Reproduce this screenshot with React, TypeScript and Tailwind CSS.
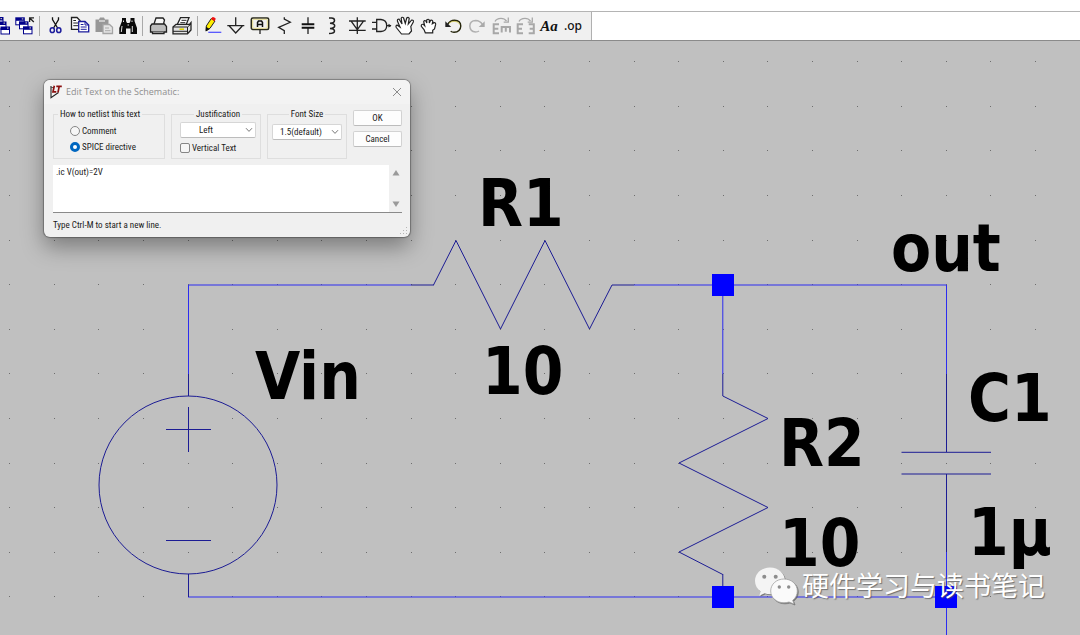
import type { ReactNode } from 'react'
import { clsx } from 'clsx'

const GRID = 44.6
const NAVY = '#00008b'

interface ToolButtonProps {
  label: string
  disabled?: boolean
  className?: string
  children: ReactNode
}

function ToolButton({ label, disabled, className, children }: ToolButtonProps) {
  return (
    <button
      type="button"
      aria-label={label}
      disabled={disabled}
      className={clsx('h-6 w-6 shrink-0', className)}
    >
      <svg viewBox="0 0 24 24" className="h-6 w-6" fill="none" stroke="#222" strokeWidth="1.3">
        {children}
      </svg>
    </button>
  )
}

function Separator() {
  return (
    <div className="flex h-5 w-[7px] shrink-0 justify-center">
      <div className="w-px bg-[#a9a9a9]" />
    </div>
  )
}

function MiniWindow({ x, y }: { x: number; y: number }) {
  return (
    <g stroke="none">
      <rect x={x} y={y} width="9.5" height="8" fill={NAVY} />
      <rect x={x + 1} y={y + 3.5} width="7.5" height="3.5" fill="#fff" />
      <rect x={x + 6.5} y={y + 1} width="1.5" height="1.2" fill="#bbb" />
    </g>
  )
}

function Toolbar() {
  return (
    <div className="flex h-[30px] border-t border-b border-t-[#b4b4b4] border-b-[#8a8a8a] bg-white">
      <div
        role="toolbar"
        aria-label="Main"
        className="flex shrink-0 items-center overflow-hidden border-r border-[#b0b0b0] bg-[#f0f0f0] pr-1.5"
      >
        <ToolButton label="Cascade" className="-ml-3">
          <MiniWindow x={6} y={3} />
          <MiniWindow x={9} y={7.5} />
          <MiniWindow x={12.5} y={12.5} />
        </ToolButton>
        <ToolButton label="Close all windows">
          <MiniWindow x={3.3} y={3.3} />
          <MiniWindow x={7} y={7.3} />
          <MiniWindow x={11} y={12.3} />
          <path d="M21.8 8 L18 4.2 M17.6 8 V3.8 H22" />
        </ToolButton>
        <Separator />
        <ToolButton label="Cut">
          <path d="M9.5 3.3 V5.5 L14.6 14 M15.5 3.3 V5.5 L10.6 14" stroke="#111" />
          <ellipse cx="9.3" cy="16.2" rx="2.1" ry="2.4" stroke="#1c1c9c" strokeWidth="1.5" />
          <ellipse cx="15.8" cy="16.2" rx="2.1" ry="2.4" stroke="#1c1c9c" strokeWidth="1.5" />
        </ToolButton>
        <ToolButton label="Copy">
          <path d="M4.5 3.5 H10 L13 6.5 V15.3 H4.5 Z" fill="#fff" />
          <path d="M6.3 6.5 H9 M6.3 9 H11 M6.3 11.7 H11" strokeWidth="1" />
          <path d="M11.7 7.5 H18 L21.7 11 V17.8 H11.7 Z" fill="#fff" stroke="#1c1c9c" />
          <path d="M18 7.5 V11 H21.7 M13.7 10.5 H16.5 M13.7 13 H19.7 M13.7 15.3 H19.7" stroke="#1c1c9c" strokeWidth="1" />
        </ToolButton>
        <ToolButton label="Paste" disabled>
          <path d="M4.5 5.5 H8 L9 3.5 H13 L14 5.5 H17.5 V18 H4.5 Z" fill="#979797" stroke="none" />
          <path d="M8 7 H14" stroke="#e6e6e6" />
          <path d="M12 10.5 H18.5 L21.5 13.3 V19.5 H12 Z" fill="#e4e4e4" stroke="#a5a5a5" />
          <path d="M14 14 H18 M14 16.7 H19.5" stroke="#aaa" strokeWidth="1" />
        </ToolButton>
        <ToolButton label="Find">
          <path
            d="M7 4 H11 V7 L12 9 H14.5 L15.5 7 V4 H19.5 V7 L22 14 V20 H15.5 V14.5 H11 V20 H4.3 V14 L7 7 Z"
            fill="#0a0a0a"
            stroke="none"
          />
          <path d="M8.5 6.5 V8 M17 6.5 V8 M7 12 L6.3 18 M17.3 12 V18 M12.5 11 H14" stroke="#ddd" strokeWidth="1" />
        </ToolButton>
        <Separator />
        <ToolButton label="Print setup">
          <path d="M8 10 L10 4 H17 L18.5 6 L17.5 10" fill="#f7f7f7" />
          <path d="M6 10 H18.5 L20.5 12.5 V18 H18 V19.5 H6.5 V18 H4.5 V12 Z" fill="#bdbdbd" />
          <path d="M6.5 17.5 H18" stroke="#666" strokeWidth="1" />
        </ToolButton>
        <ToolButton label="Print">
          <path d="M7 11 L10.5 3.7 H19 L16 11" fill="#fff" />
          <path d="M11.5 6.3 H16.5 M10.3 8.7 H15.3" strokeWidth="1" />
          <path d="M3 13 L6 10.3 H19.5 L21 8.5 V16 L17.5 19.8 H3 Z" fill="#e2e2e2" />
          <path d="M3 13 H17.5 L21 10 M17.5 13 V19.8 M3 17.3 H17.5" strokeWidth="1" />
          <path d="M9.5 15.2 H14" stroke="#e3d700" strokeWidth="1.6" />
        </ToolButton>
        <Separator />
        <ToolButton label="Draw wire">
          <path d="M7.3 18.3 H20.3" stroke="#4a4aff" strokeWidth="1.2" />
          <path d="M5 16.8 L5.3 12 L10.3 4.5 L14 7 L9 14.3 Z" fill="#ffee00" stroke="#222" strokeWidth="1" />
          <path d="M10 5 L11.3 3.2 Q13 2.7 14.8 4.8 L13.6 7.2 Z" fill="#ef1010" stroke="none" />
          <path d="M4.7 17.5 L5 12.7 L8.7 14.9 Z" fill="#111" stroke="none" />
        </ToolButton>
        <ToolButton label="Ground">
          <path d="M10.7 3.3 V11.7 M2.3 11.7 H19.3 M4.3 12 L10.7 19 L17.3 12" />
        </ToolButton>
        <ToolButton label="Label net">
          <rect x="2.3" y="4" width="17.4" height="11.5" rx="1.5" stroke="#2a2a1c" strokeWidth="1.5" />
          <rect x="3.7" y="5.3" width="14.6" height="9" rx="1" stroke="#e6dd8c" strokeWidth="1" />
          <path d="M11 15.5 V20" />
          <path d="M8.5 13 V8.5 L9.5 7 H12.5 L13.5 8.5 V13 M8.5 10.5 H13.5" strokeWidth="1.5" stroke="#111" />
        </ToolButton>
        <ToolButton label="Resistor">
          <path d="M11.3 3.3 V5 L17.3 8.3 L5.6 13.3 L11.3 16.7 V20" />
        </ToolButton>
        <ToolButton label="Capacitor">
          <path d="M11 3.3 V10 M11 14 V20" />
          <path d="M4.7 10.2 H17.3 M4.7 13.8 H17.3" stroke="#111" strokeWidth="1.9" />
        </ToolButton>
        <ToolButton label="Inductor">
          <path
            d="M8 4 H10.5 Q13.5 4 13.5 6.5 Q13.5 9 9 9.2 Q13.7 9.5 13.7 11.8 Q13.7 14.2 9 14.4 Q13.5 14.7 13.5 17 Q13.5 19.5 8 19.5"
            strokeWidth="1.5"
          />
        </ToolButton>
        <ToolButton label="Diode">
          <path d="M12.3 3.3 V20 M4 7 H20.7 M6.3 7.3 L12.3 15.7 L18.3 7.3 M4 16.3 H20.7" />
        </ToolButton>
        <ToolButton label="Component">
          <path d="M7.7 5.5 H12 Q17.7 6 17.7 11.7 Q17.7 17 12 17.5 H7.7 Z M3 8.3 H7.7 M3 15 H7.7 M17.7 11.7 H22" />
          <path d="M19.5 9.7 L22.5 11.7 L19.5 13.5 Z" fill="#222" stroke="none" />
        </ToolButton>
        <ToolButton label="Move">
          <path
            d="M8.5 20 L3.3 13.5 Q2.3 11.5 4.3 11.2 L7 13 L4.5 7.3 Q4 5 6 5 L9 10 L8.2 4.5 Q8.8 2.5 10.5 3.7 L12.3 9.3 L13.7 4 Q15.2 2.5 16.2 4.3 L15.3 10 L18.5 6.2 Q21 5.8 20.3 8 L17.8 12.5 L18.5 17 L16 20 Z"
            fill="#fff"
            strokeWidth="1.2"
          />
        </ToolButton>
        <ToolButton label="Drag">
          <path
            d="M8.3 18.8 L7 15.5 L4.3 12.3 Q4 10 6.3 10.3 L7.7 11.7 L6.7 7.7 Q7.3 5.9 9 7 L9.8 9 L9.7 6 Q11.2 4.5 12.3 6 V9 L13.5 6.4 Q15.3 5.5 15.8 7.4 L15.3 9.7 L17 8.7 Q19 8.5 18.6 10.7 L17.5 15 L15.7 16.3 V18.8 Z"
            fill="#fff"
            strokeWidth="1.2"
          />
        </ToolButton>
        <ToolButton label="Undo">
          <path d="M6.3 10.8 Q9 6.3 13.5 6.3 Q19.7 6.5 19.8 12 Q19.5 18 13 18.3 Q11 18.3 9.7 17.3" stroke="#24240a" strokeWidth="1.4" />
          <path d="M8 9.3 Q10.3 7.3 13.3 7.3 Q17.8 7.4 18.6 10.5" stroke="#d8cb28" strokeWidth="0.6" />
          <path d="M4.3 7.2 V13 H10.2 Z" fill="#222" stroke="none" />
        </ToolButton>
        <ToolButton label="Redo" disabled>
          <path d="M17.7 10.8 Q15 6.5 10.7 6.5 Q5 6.7 4.8 12 Q5 17.6 10.5 18 Q12.7 18 14 17" stroke="#b0b0b0" strokeWidth="1.5" />
          <path d="M19.7 7.3 V13 H13.7 Z" fill="#aaa" stroke="none" />
        </ToolButton>
        <ToolButton label="Rotate" disabled>
          <g stroke="#a8a8a8">
            <path d="M6 7.5 Q7.5 4.3 12 4.3 Q15.5 4.3 17.5 7" />
            <path d="M19.3 3.5 V8.2 H14.7" />
            <path d="M10 10.2 H4.7 V19.3 H10 M4.7 14.7 H9.3 M12.7 18.5 V13 H21 V18.5 M16.8 13 V17.7" strokeWidth="2" />
          </g>
        </ToolButton>
        <ToolButton label="Mirror" disabled>
          <g stroke="#a8a8a8">
            <path d="M6 7.5 Q7.5 4.3 12 4.3 Q15.5 4.3 17.5 7" />
            <path d="M19.3 3.5 V8.2 H14.7" />
            <path d="M10 10.2 H4.7 V19.3 H10 M4.7 14.7 H9 M15.7 10.2 H20.8 V19.3 H15.7 M20.8 14.7 H16.7" strokeWidth="2" />
          </g>
        </ToolButton>
        <button
          type="button"
          className="h-6 w-6 shrink-0 font-['Liberation_Serif',serif] text-[15px] leading-6 font-bold text-[#111] italic"
        >
          Aa
        </button>
        <button
          type="button"
          className="h-6 w-6 shrink-0 font-['Noto_Sans',sans-serif] text-xs leading-5 font-medium text-[#111]"
        >
          .op
        </button>
      </div>
    </div>
  )
}

const labels = [
  { x: 478, y: 226, text: 'R1' },
  { x: 482, y: 394, text: '10' },
  { x: 255, y: 399, text: 'Vin' },
  { x: 891, y: 271, text: 'out' },
  { x: 779, y: 466, text: 'R2' },
  { x: 968, y: 421, text: 'C1' },
  { x: 779, y: 566, text: '10' },
  { x: 968, y: 555, text: '1µ' },
]

const dots = Array.from({ length: 24 * 48 }, (_, i) => ({
  x: Math.round(9.2 + (i % 48) * GRID),
  y: Math.round(61.2 + Math.floor(i / 48) * GRID),
}))

function Schematic() {
  return (
    <svg className="absolute inset-0 h-full w-full" role="img" aria-label="RC schematic">
      {/* drawn in window coordinates, shifted up by the toolbar */}
      <g transform="translate(0 -41)">
        <g fill="#6e6e6e">
          {dots.map((dot) => (
            <rect key={`${dot.x}-${dot.y}`} x={dot.x} y={dot.y} width="1" height="1" />
          ))}
        </g>

        <g fill="none" stroke="#2c2cf0">
          <path d="M188.5 374 V285 H411 M634 285 H946.5 V374 M722.8 285 V374" />
          <path d="M188 597 H946.5 M946.5 552 V5000" />
        </g>

        <g fill="none" stroke="#1c1c94">
          <path d="M188.5 374 V396 M188.5 574 V597 M166 429.5 H211 M188.5 407 V452 M166 540.5 H211" />
          <path d="M946.5 374 V452 M901.5 452.3 H991 M901.5 474 H991 M946.5 474 V552 M411 285 H434 M612 285 H634 M722.8 374 V396 M722.8 574 V597" />
          <circle cx="188" cy="485" r="89" />
          <path d="M433.5 285 L456 240.5 L500.5 329 L545 240.5 L589.5 329 L612 285" />
          <path d="M722.8 396 L768 418.5 L679 463 L768 507.5 L679 552 L722.8 574.5" />
        </g>

        <g fill="#0000ff">
          <rect x="712" y="274" width="22" height="22" />
          <rect x="712" y="586" width="22" height="22" />
          <rect x="935" y="586" width="22" height="22" />
        </g>

        <g className="fill-black font-['DejaVu_Sans_Condensed','DejaVu_Sans',sans-serif] text-[65px] font-bold">
          {labels.map((label) => (
            <text key={`${label.x}-${label.y}`} x={label.x} y={label.y}>
              {label.text}
            </text>
          ))}
        </g>
      </g>
    </svg>
  )
}

function Group({ title, className, children }: { title: string; className: string; children: ReactNode }) {
  return (
    <fieldset className={clsx('h-[51px] min-w-0 shrink-0 border border-[#dedede]', className)}>
      <legend className="px-0.5 leading-3">{title}</legend>
      {children}
    </fieldset>
  )
}

function Select({ label, value, className }: { label: string; value: string; className: string }) {
  return (
    <div className="relative">
      <select
        aria-label={label}
        defaultValue={value}
        className={clsx(
          'block h-4 w-full appearance-none rounded-xs border border-[#d6d6d6] border-b-[#bcbcbc] bg-white leading-3',
          className
        )}
      >
        <option>{value}</option>
      </select>
      <svg viewBox="0 0 8 6" className="pointer-events-none absolute top-[5px] right-[3px] h-1.5 w-2" fill="none" stroke="#777">
        <path d="M1 1.2 L4 4.4 L7 1.2" />
      </svg>
    </div>
  )
}

function Radio({ label, checked }: { label: string; checked?: boolean }) {
  return (
    <label className="flex h-3 items-center gap-0.5">
      <input
        type="radio"
        name="netlist"
        defaultChecked={checked}
        className="h-2.5 w-2.5 appearance-none rounded-full border border-[#868686] bg-[#f6f6f6] checked:border-3 checked:border-[#0067c0] checked:bg-white"
      />
      {label}
    </label>
  )
}

function EditTextDialog() {
  return (
    <form
      role="dialog"
      aria-label="Edit Text on the Schematic"
      className="absolute top-[39px] left-11 w-[366px] overflow-hidden rounded-md bg-[#f0f0f0] font-['Roboto_Condensed','Liberation_Sans',sans-serif] text-[9px] leading-3 text-[#1a1a1a] shadow-[0_0_1px_1px_rgba(0,0,0,0.3),0_10px_22px_rgba(0,0,0,0.36)]"
    >
      <div className="flex h-6 items-center gap-1 bg-[#f3f3f3] pr-2 pl-1.5">
        <svg viewBox="0 0 12 14" className="h-3.5 w-3" fill="none">
          <path d="M1 1 V12.7 L8.5 7.5 M0.8 1.5 L4 2.7" stroke="#222" strokeWidth="1.1" />
          <path d="M4.3 0.8 L3 6.8 H6.3 M6.3 1.3 H11.8 M9.2 1.3 L8 7.3" stroke="#8b1010" strokeWidth="1.7" />
        </svg>
        <h1 className="flex-1 font-['Open_Sans',sans-serif] text-[9px] text-[#8f8f8f]">Edit Text on the Schematic:</h1>
        <button type="button" aria-label="Close" className="h-2.5 w-2.5">
          <svg viewBox="0 0 10 10" className="h-2.5 w-2.5" stroke="#8c8c8c">
            <path d="M1 1 L9 9 M9 1 L1 9" />
          </svg>
        </button>
      </div>

      <div className="pt-1 pr-2 pb-1.5 pl-[9px]">
        <div className="flex gap-1.5">
          <Group title="How to netlist this text" className="w-28 pl-1">
            <div className="flex flex-col gap-1 pt-[5px] pl-3">
              <Radio label="Comment" />
              <Radio label="SPICE directive" checked />
            </div>
          </Group>
          <Group title="Justification" className="w-[90px] pr-1 pl-2 text-center">
            <div className="flex flex-col gap-1 pt-0.5 text-left">
              <Select label="Justification" value="Left" className="pl-[18px]" />
              <label className="flex h-3 items-center gap-0.5">
                <input
                  type="checkbox"
                  className="h-2.5 w-2.5 appearance-none rounded-xs border border-[#868686] bg-[#f6f6f6]"
                />
                Vertical Text
              </label>
            </div>
          </Group>
          <Group title="Font Size" className="w-20 px-1 text-center">
            <div className="pt-1 text-left">
              <Select label="Font Size" value="1.5(default)" className="pl-[7px]" />
            </div>
          </Group>
          <div className="flex flex-1 flex-col gap-[5px] pt-0.5">
            <button type="submit" className="h-4 rounded-xs border border-[#d2d2d2] border-b-[#bcbcbc] bg-[#fdfdfd]">
              OK
            </button>
            <button type="button" className="h-4 rounded-xs border border-[#d2d2d2] border-b-[#bcbcbc] bg-[#fdfdfd]">
              Cancel
            </button>
          </div>
        </div>

        <div className="mt-1.5 flex h-12 border-b border-[#8a8a8a] bg-white">
          <textarea
            aria-label="Text"
            defaultValue=".ic V(out)=2V"
            className="flex-1 resize-none overflow-hidden px-[3px] pt-px outline-none"
          />
          <div className="flex w-[13px] flex-col justify-between bg-[#f0f0f0] py-1">
            <button type="button" aria-label="Scroll up" className="flex justify-center">
              <svg viewBox="0 0 8 8" className="h-2 w-2">
                <path d="M4 1 L7.5 6.5 H0.5 Z" fill="#9a9a9a" />
              </svg>
            </button>
            <button type="button" aria-label="Scroll down" className="flex justify-center">
              <svg viewBox="0 0 8 8" className="h-2 w-2">
                <path d="M4 7 L7.5 1.5 H0.5 Z" fill="#9a9a9a" />
              </svg>
            </button>
          </div>
        </div>
        <p className="mt-1.5">Type Ctrl-M to start a new line.</p>
      </div>
      <svg viewBox="0 0 8 8" className="absolute right-0.5 bottom-0.5 h-2 w-2" fill="#b5b5b5">
        <path d="M6 0 h1 v1 h-1 z M3 3 h1 v1 h-1 z M6 3 h1 v1 h-1 z M0 6 h1 v1 h-1 z M3 6 h1 v1 h-1 z M6 6 h1 v1 h-1 z" />
      </svg>
    </form>
  )
}

function Watermark() {
  return (
    <div className="absolute top-[524px] left-[754px] flex items-center gap-1 whitespace-nowrap text-white">
      <svg viewBox="0 0 44 40" className="h-10 w-11 drop-shadow-[1px_1px_0_rgba(90,90,90,0.7)]">
        <path
          d="M16 2.5 C7.5 2.5 1 8.5 1 16 C1 20.3 3.2 24 6.7 26.5 L5.3 30.8 L10.6 28.3 C12.3 28.9 14 29.2 16 29.2 C24.5 29.2 31 23.4 31 16 C31 8.5 24.5 2.5 16 2.5 Z"
          fill="#f4f4f4"
        />
        <circle cx="10.3" cy="11.8" r="2" fill="#8d8d8d" />
        <circle cx="21.7" cy="11.8" r="2" fill="#8d8d8d" />
        <path
          d="M30 14 C22.5 14 16.7 19.2 16.7 26 C16.7 32.6 22.5 37.8 30 37.8 C31.8 37.8 33.5 37.5 35 37 L40 39 L38.7 35.3 C41.7 33 43.3 29.8 43.3 26 C43.3 19.2 37.5 14 30 14 Z"
          fill="#fafafa"
          stroke="#a2a2a2"
          strokeWidth="0.8"
        />
        <circle cx="25.3" cy="22" r="1.7" fill="#8d8d8d" />
        <circle cx="34.7" cy="22" r="1.7" fill="#8d8d8d" />
      </svg>
      <span className="font-['Noto_Sans_CJK_SC',sans-serif] text-[27px] leading-10 font-normal [text-shadow:1px_1px_1px_rgba(80,80,80,0.7)]">
        硬件学习与读书笔记
      </span>
    </div>
  )
}

export default function App() {
  return (
    <div className="flex min-h-screen flex-col bg-white pt-[11px]">
      <Toolbar />
      <main className="relative flex-1 overflow-hidden bg-[#c0c0c0]">
        <Schematic />
        <EditTextDialog />
        <Watermark />
      </main>
    </div>
  )
}
